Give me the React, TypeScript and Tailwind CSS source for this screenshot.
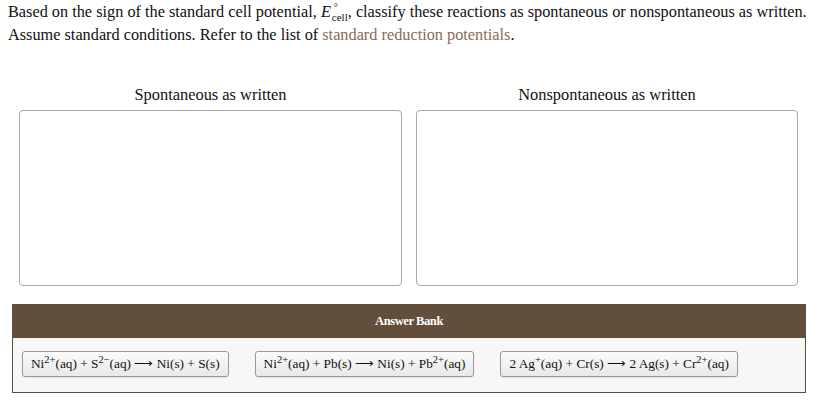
import React from "react";

const serif = { fontFamily: '"Liberation Serif", "Times New Roman", serif' };

function Chip({ children }: { children: React.ReactNode }) {
  return (
    <div className="h-[26px] px-[8px] flex items-center rounded-[3px] border border-[#9a9a9a] bg-gradient-to-b from-[#fbfbfb] to-[#e9e9e9] text-[13.3px] text-[#111] whitespace-nowrap shadow-[0_1px_1px_rgba(0,0,0,0.08)]">
      {children}
    </div>
  );
}

const Sup = ({ children }: { children: React.ReactNode }) => (
  <span className="text-[10.5px] leading-none relative top-[-4px]">{children}</span>
);

export default function App() {
  return (
    <div className="w-[822px] h-[405px] bg-white text-[#111]" style={serif}>
      <div className="pl-[8px] text-[16.3px] leading-[23px]">
        <div className="whitespace-nowrap">
          Based on the sign of the standard cell potential,{" "}
          <span className="italic">E</span>
          <span className="relative inline-block align-[-4px] text-[11px] leading-[11px] ml-[1px]">
            <span className="absolute left-[2px] top-[-8px] text-[10px] leading-[8px]">°</span>
            cell
          </span>
          , classify these reactions as spontaneous or nonspontaneous as written.
        </div>
        <div>
          Assume standard conditions. Refer to the list of{" "}
          <span className="text-[#8a6c52]">standard reduction potentials</span>.
        </div>
      </div>

      <div className="pl-[19px] pr-[24px] mt-[39px] flex gap-[14px]">
        <div className="w-[383px] flex flex-col">
          <div className="text-center text-[16.4px] leading-[20px] h-[25px]">Spontaneous as written</div>
          <div className="h-[176px] rounded-[4px] border border-[#a8a8a8] bg-white" />
        </div>
        <div className="w-[382px] flex flex-col">
          <div className="text-center text-[16.4px] leading-[20px] h-[25px]">Nonspontaneous as written</div>
          <div className="h-[176px] rounded-[4px] border border-[#a8a8a8] bg-white" />
        </div>
      </div>

      <div className="ml-[12px] mt-[18px] w-[794px] border border-[#5f4b3a]">
        <div className="h-[33px] bg-[#634e3c] flex items-center justify-center text-white font-bold text-[12.5px] tracking-[-0.4px]">
          Answer Bank
        </div>
        <div className="h-[54px] bg-[#f7f7f7] pl-[9px] pt-[13px] flex items-start gap-[26px]">
          <Chip>
            Ni<Sup>2+</Sup>(aq) + S<Sup>2−</Sup>(aq) ⟶ Ni(s) + S(s)
          </Chip>
          <Chip>
            Ni<Sup>2+</Sup>(aq) + Pb(s) ⟶ Ni(s) + Pb<Sup>2+</Sup>(aq)
          </Chip>
          <Chip>
            2 Ag<Sup>+</Sup>(aq) + Cr(s) ⟶ 2 Ag(s) + Cr<Sup>2+</Sup>(aq)
          </Chip>
        </div>
      </div>
    </div>
  );
}
